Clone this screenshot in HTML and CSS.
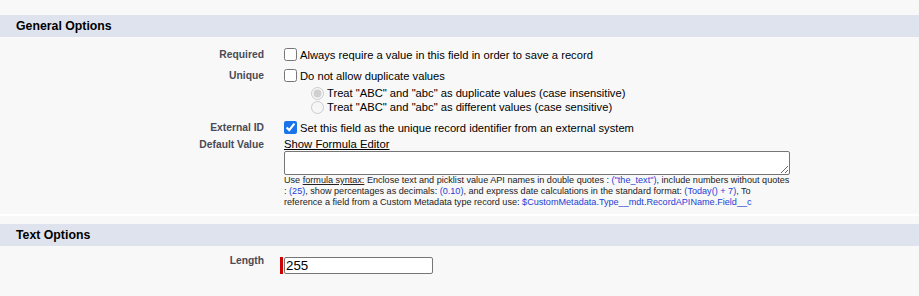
FILE: index.html
```html
<!DOCTYPE html>
<html lang="en">
<head>
<meta charset="utf-8">
<title>Field Options</title>
<link rel="stylesheet" href="styles.css">
</head>
<body>
<div class="page">
  <section class="section first">
    <h2 class="sec-head">General Options</h2>
    <div class="rows">
      <div class="row row-chk">
        <div class="lbl">Required</div>
        <div class="data"><label class="opt"><input type="checkbox" class="cb"><span>Always require a value in this field in order to save a record</span></label></div>
      </div>
      <div class="row row-chk">
        <div class="lbl">Unique</div>
        <div class="data"><label class="opt"><input type="checkbox" class="cb"><span>Do not allow duplicate values</span></label></div>
      </div>
      <div class="row row-radios">
        <div class="lbl"></div>
        <div class="data radios">
          <label class="opt radio-opt"><input type="radio" name="casemode" class="rb" checked disabled><span>Treat "ABC" and "abc" as duplicate values (case insensitive)</span></label>
          <label class="opt radio-opt"><input type="radio" name="casemode" class="rb" disabled><span>Treat "ABC" and "abc" as different values (case sensitive)</span></label>
        </div>
      </div>
      <div class="row row-chk">
        <div class="lbl">External ID</div>
        <div class="data"><label class="opt"><input type="checkbox" class="cb" checked><span>Set this field as the unique record identifier from an external system</span></label></div>
      </div>
      <div class="row row-default">
        <div class="lbl">Default Value</div>
        <div class="data">
          <a class="formula-link" href="#">Show Formula Editor</a>
          <textarea class="ta"></textarea>
          <div class="help">Use <a href="#">formula syntax:</a> Enclose text and picklist value API names in double quotes : <span class="code">("the_text")</span>, include numbers without quotes<br>: <span class="code">(25)</span>, show percentages as decimals: <span class="code">(0.10)</span>, and express date calculations in the standard format: <span class="code">(Today() + 7)</span>, To<br>reference a field from a Custom Metadata type record use: <span class="code">$CustomMetadata.Type__mdt.RecordAPIName.Field__c</span></div>
        </div>
      </div>
    </div>
  </section>
  <section class="section">
    <h2 class="sec-head">Text Options</h2>
    <div class="rows rows-text">
      <div class="row row-len">
        <div class="lbl">Length</div>
        <div class="data len-data">
          <div class="req-wrap"><span class="req-bar"></span><input type="text" class="txt" value="255"></div>
        </div>
      </div>
    </div>
  </section>
</div>
</body>
</html>
```

FILE: styles.css
```css
html, body {
  margin: 0;
  background: #f8f8f8;
}
body {
  font-family: "Liberation Sans", Arial, sans-serif;
  color: #000;
}
.page {
  padding-top: 15px;
}
.sec-head {
  margin: 0;
  height: 22px;
  line-height: 22px;
  background: #dfe3ed;
  padding-left: 16px;
  font-size: 12.3px;
  font-weight: bold;
  color: #000;
}
.section.first {
  padding-bottom: 6px;
  border-bottom: 2px solid #fff;
  margin-bottom: 8px;
}
.rows {
  padding-top: 7px;
}
.row {
  display: grid;
  grid-template-columns: 264px 1fr;
  column-gap: 20px;
}
.lbl {
  text-align: right;
  font-weight: bold;
  font-size: 10.3px;
  color: #4a4a56;
}
.row-chk {
  height: 21px;
  align-items: center;
}
.opt {
  display: flex;
  align-items: center;
  gap: 3px;
  font-size: 11.2px;
  color: #000;
}
.cb {
  margin: 0;
  width: 13px;
  height: 13px;
  accent-color: #1a73e8;
}
.radios {
  padding-left: 27px;
  padding-bottom: 3px;
}
.radio-opt {
  height: 14px;
}
.rb {
  margin: 0;
  width: 13px;
  height: 13px;
}
.row-default .lbl {
  line-height: 14px;
}
.formula-link {
  display: block;
  font-size: 11.3px;
  line-height: 13px;
  color: #000;
  text-decoration: underline;
}
.ta {
  display: block;
  box-sizing: border-box;
  width: 506px;
  height: 24px;
  margin: 0;
  border: 1px solid #767676;
  border-radius: 2px;
  background: #fff;
  font-family: "Liberation Sans", Arial, sans-serif;
}
.help {
  font-size: 9.1px;
  line-height: 11px;
  white-space: nowrap;
  color: #222;
}
.help a {
  color: #222;
  text-decoration: underline;
}
.help .code {
  color: #2341d6;
}
.rows-text {
  padding-top: 8px;
}
.row-len {
  align-items: start;
}
.row-len .lbl {
  line-height: 14px;
}
.len-data {
  padding-top: 3px;
}
.req-wrap {
  display: flex;
  margin-left: -4px;
}
.req-bar {
  width: 3px;
  height: 17px;
  background: #c00;
  margin-right: 1px;
}
.txt {
  box-sizing: border-box;
  width: 149px;
  height: 17px;
  margin: 0;
  padding: 0 1px;
  border: 1px solid #767676;
  border-radius: 2px;
  background: #fff;
  font-family: "Liberation Sans", Arial, sans-serif;
  font-size: 13.3px;
  color: #000;
}
```
